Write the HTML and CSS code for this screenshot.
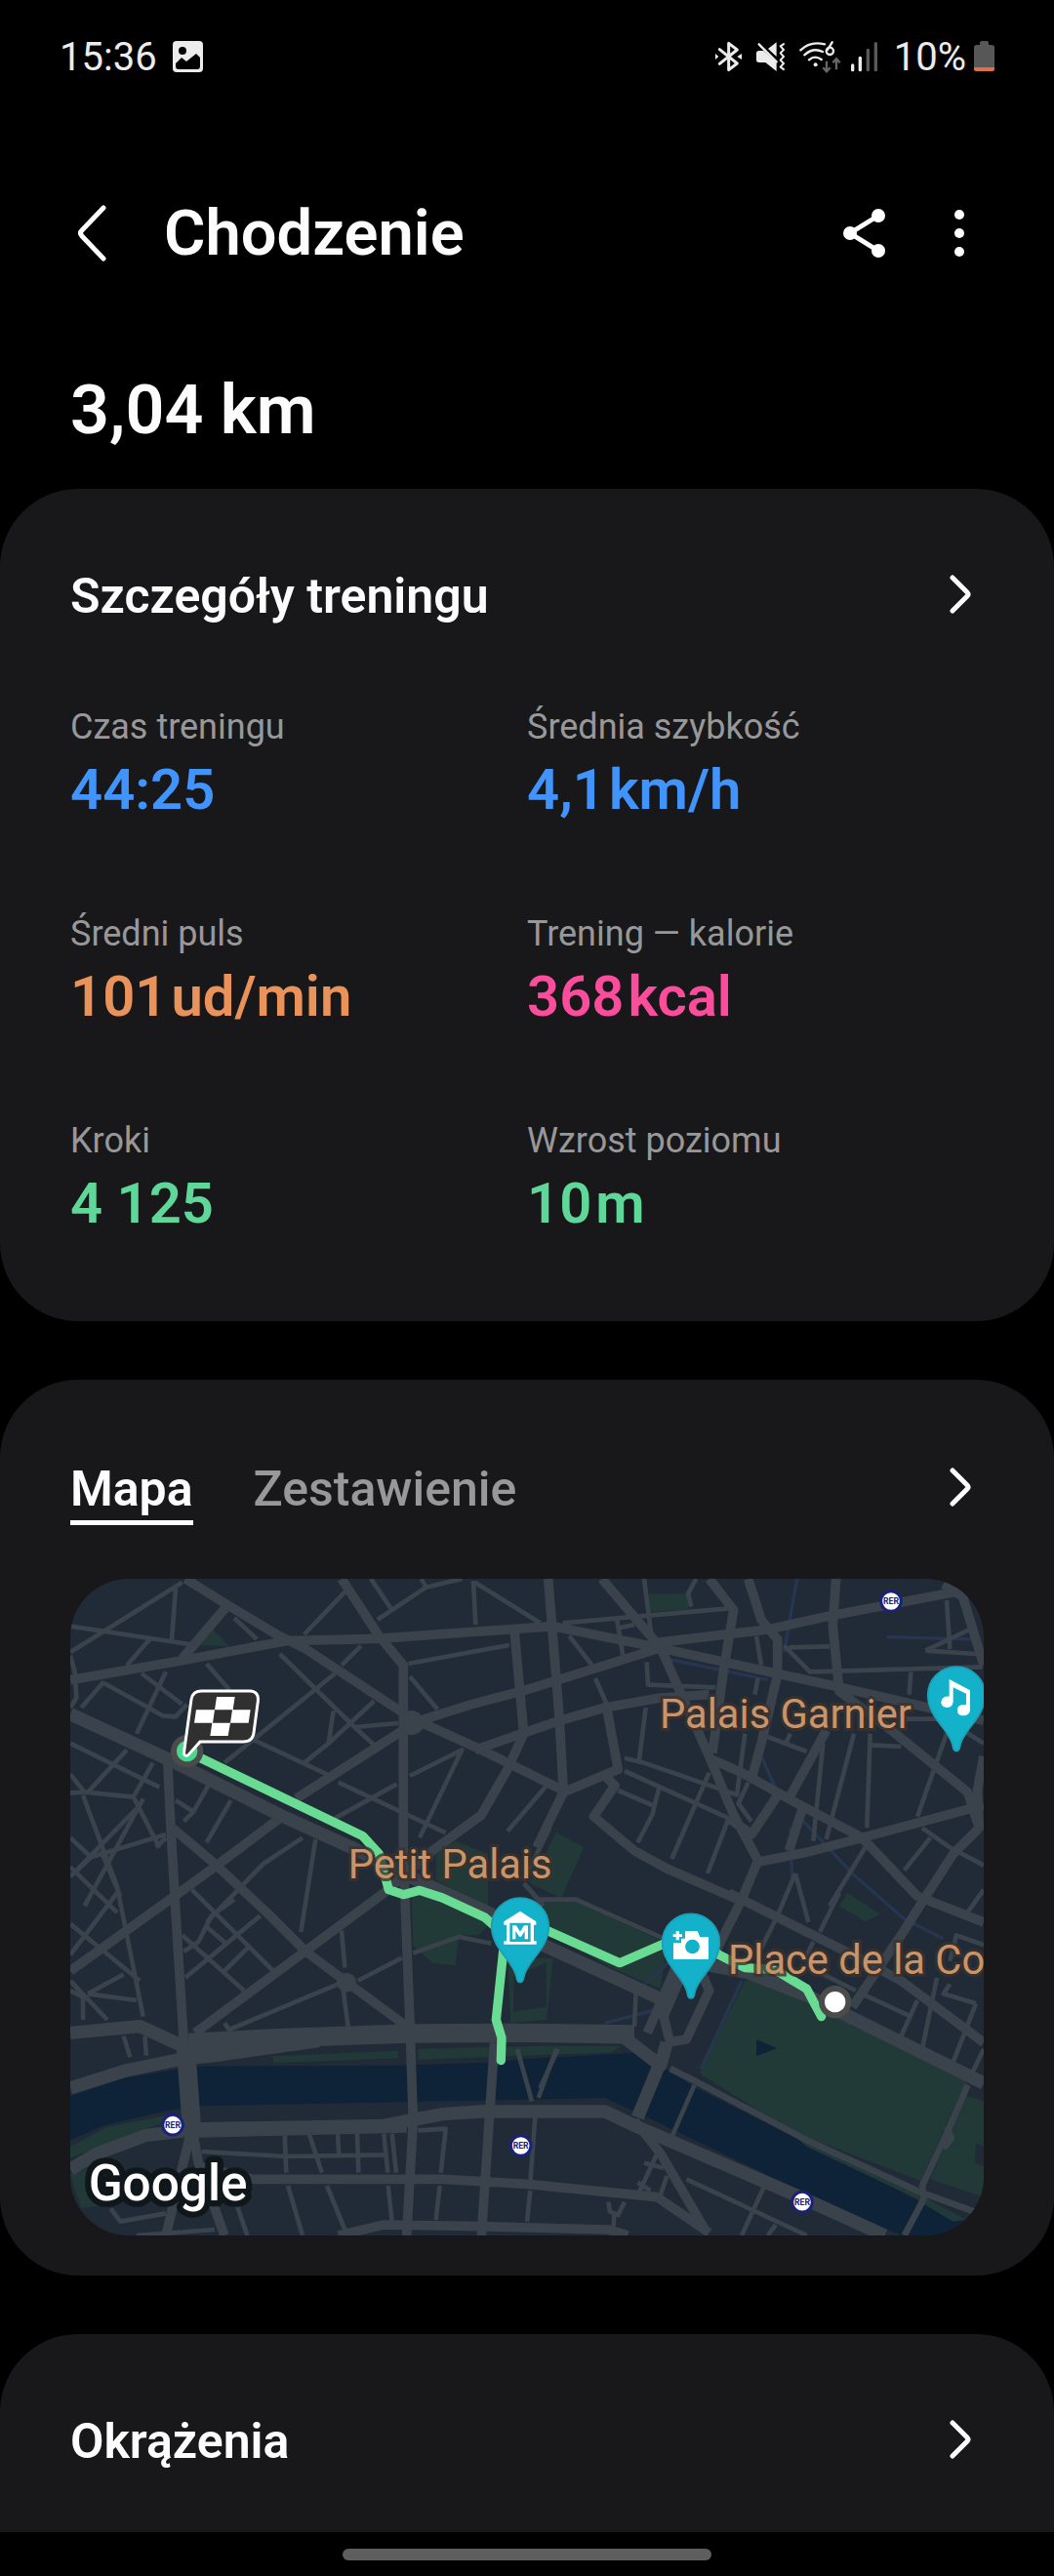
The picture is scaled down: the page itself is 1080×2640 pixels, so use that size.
FILE: index.html
```html
<!DOCTYPE html>
<html lang="pl">
    <head>
        <meta charset="utf-8" />
        <meta name="viewport" content="width=device-width, initial-scale=1" />
        <title>Chodzenie</title>
        <link rel="stylesheet" href="styles.css">
    </head>
    <body>
        <div class="status">
            <span class="status__time">15:36</span>
            <svg class="status__photo" width="31" height="32" viewBox="0 0 31 32">
                <rect width="31" height="32" rx="4" fill="#ececec"/>
                <circle cx="10" cy="10" r="4"/>
                <path d="M3 23l6-6 5 4 10-8 4 4v9q0 3-3 3H6q-3 0-3-3z"/>
            </svg>
            <div class="status__icons">
                <svg width="27" height="32" viewBox="0 0 81 96">
                    <path d="M13 26l54 43-26 20V7l26 20-54 43" fill="none" stroke="#ececec" stroke-width="9" stroke-linejoin="round" stroke-linecap="round"/>
                    <path d="M0 39l10 9-10 9zM81 39l-14 9 14 9z" fill="#ececec"/>
                </svg>
                <svg class="status__mute" width="30" height="32" viewBox="0 0 90 96">
                    <path d="M0 38q0-8 8-8h14L62 66v27L28 66H8q-8 0-8-8zM36 24L62 4v44z" fill="#ececec"/>
                    <path d="M8 10l54 54" stroke="#ececec" stroke-width="7" stroke-linecap="round"/>
                    <path d="M86 8l-12 8 10 11-10 10 10 11-10 11 10 10-10 11 12 9" fill="none" stroke="#ececec" stroke-width="6" stroke-linejoin="round"/>
                </svg>
                <svg class="status__wifi" width="43" height="33" viewBox="0 0 129 99">
                    <path d="M4 28q30-29 74-18M16 43q26-24 56-10M30 58q18-16 38-1" fill="none" stroke="#ececec" stroke-width="7" stroke-linecap="round"/>
                    <circle cx="50" cy="73" r="6" fill="#ececec"/>
                    <path d="M101 4L87 27" stroke="#ececec" stroke-width="7" stroke-linecap="round"/>
                    <circle cx="94" cy="31" r="11" fill="none" stroke="#ececec" stroke-width="7"/>
                    <path d="M84 62v32M73 82l11 12 11-12M114 88V56M103 67l11-12 11 12" fill="none" stroke="#666" stroke-width="7"/>
                </svg>
                <svg class="status__signal" width="28" height="32" viewBox="0 0 84 96">
                    <path d="M5 75v14M28 52v37" stroke="#ececec" stroke-width="10" stroke-linecap="round"/>
                    <path d="M52 28v61M76 8v81" stroke="#5a5a5a" stroke-width="10" stroke-linecap="round"/>
                </svg>
                <span class="status__level">10%</span>
                <svg width="21" height="32" viewBox="0 0 21 32">
                    <path d="M6 2q0-2 2-2h5q2 0 2 2v2h3q3 0 3 3v20H0V7q0-3 3-3h3z" fill="#575757"/>
                    <path d="M0 27h21v2q0 2-3 2H3q-3 0-3-2z" fill="#e0704a"/>
                </svg>
            </div>
        </div>

        <header class="header">
            <button class="icon-btn" aria-label="Wstecz">
                <svg width="32" height="60" viewBox="0 0 32 60"><path d="M28 4L6 27q-3 3 0 6l22 23" fill="none" stroke="#fff" stroke-width="5" stroke-linecap="round"/></svg>
            </button>
            <h1 class="header__title">Chodzenie</h1>
            <button class="icon-btn" aria-label="Udostępnij">
                <svg width="44" height="50" viewBox="0 0 44 50">
                    <path d="M36 7L7 25l29 18" fill="none" stroke="#fff" stroke-width="5"/>
                    <g fill="#fff"><circle cx="36" cy="7" r="7"/><circle cx="7" cy="25" r="7"/><circle cx="36" cy="43" r="7"/></g>
                </svg>
            </button>
            <button class="icon-btn icon-btn--more" aria-label="Więcej opcji">
                <svg width="10" height="50" viewBox="0 0 10 50" fill="#fff"><circle cx="5" cy="6" r="5"/><circle cx="5" cy="25" r="5"/><circle cx="5" cy="44" r="5"/></svg>
            </button>
        </header>

        <p class="distance">3,04 km</p>

        <main class="cards">
            <section class="card">
                <a class="card__head" href="#">
                    <h2 class="card__title">Szczegóły treningu</h2>
                    <svg class="arrow" width="24" height="40" viewBox="0 0 24 40"><path d="M4 3l15 15q2 2 0 4L4 37"/></svg>
                </a>
                <dl class="stats">
                    <div class="stat">
                        <dt>Czas treningu</dt>
                        <dd class="blue">44:25</dd>
                    </div>
                    <div class="stat">
                        <dt>Średnia szybkość</dt>
                        <dd class="blue">4,1<span>km/h</span></dd>
                    </div>
                    <div class="stat">
                        <dt>Średni puls</dt>
                        <dd class="orange">101<span>ud/min</span></dd>
                    </div>
                    <div class="stat">
                        <dt>Trening — kalorie</dt>
                        <dd class="pink">368<span>kcal</span></dd>
                    </div>
                    <div class="stat">
                        <dt>Kroki</dt>
                        <dd class="green">4 125</dd>
                    </div>
                    <div class="stat">
                        <dt>Wzrost poziomu</dt>
                        <dd class="green">10<span>m</span></dd>
                    </div>
                </dl>
            </section>

            <section class="card card--map">
                <div class="card__head">
                    <div class="tabs">
                        <button class="tab tab--active">Mapa</button>
                        <button class="tab">Zestawienie</button>
                    </div>
                    <a class="card__more" href="#" aria-label="Otwórz mapę">
                        <svg class="arrow" width="24" height="40" viewBox="0 0 24 40"><path d="M4 3l15 15q2 2 0 4L4 37"/></svg>
                    </a>
                </div>
                <svg class="map" viewBox="36 54 2808 2019">
                    <defs>
                        <path id="pin" d="M0 172c-6 0-10-6-11-14C-16 110-88 70-88 0A88 88 0 1 1 88 0C88 70 16 110 11 158 10 166 6 172 0 172z"/>
                    </defs>
                    <rect x="36" y="54" width="2808" height="2019" fill="#202b37"/>

                    <!-- Seine -->
                    <path class="map__water" d="M36 1645L200 1590 365 1562 430 1553 1070 1550 1350 1540 1440 1530 1770 1512 1850 1550 1960 1620 2260 1770 2650 1970 2844 2050V2073H2590L2290 1940 1810 1710 1680 1650 1440 1655 430 1675 330 1690 140 1735 36 1780z"/>

                    <!-- parks -->
                    <g class="map__park">
                        <path d="M2110 1290L2200 1285 2790 1600 2650 1905 2260 1755 1970 1575z"/>
                        <path d="M2790 1645L2844 1660V1955L2680 1900z"/>
                        <path d="M2670 1960L2790 2025 2750 2030 2640 1965z"/>
                        <path d="M2260 1765L2650 1940V1965L2300 1800z"/>
                        <path d="M1085 1030L1150 1010 1330 1110 1290 1150 1230 1150 1220 1243 1150 1235 1090 1180z"/>
                        <path d="M1440 1040L1590 1045 1870 1175 1850 1315 1700 1250 1480 1130z"/>
                        <path d="M1380 1220L1520 1220 1500 1410 1390 1420z"/>
                        <path d="M1160 900L1220 860 1320 900V1070L1160 980z"/>
                        <path d="M1530 835L1615 880 1545 1035 1450 990z"/>
                        <path d="M660 1522L1045 1505V1528L660 1542z"/>
                        <path d="M1105 1500L1480 1490 1730 1490 1700 1510 1105 1532z"/>
                        <path d="M36 1800L150 1740 330 1705V1722L150 1790 36 1835z"/>
                        <path d="M36 1885L120 1860 130 1980 70 1990z"/>
                        <path d="M1815 100H1935V148L1815 156z"/>
                        <path d="M475 210L525 262 435 258z"/>
                        <path d="M2425 1020L2525 1085 2480 1108 2400 1060z"/>
                    </g>
                    <path d="M1400 1275L1500 1235V1370L1398 1385zM2820 1790l24 10v60l-28-10z" fill="#202b37"/>
                    <path class="map__water" d="M2145 1470L2208 1498 2145 1522z"/>

                    <!-- underground lines -->
                    <g class="map__line">
                        <path d="M2270 54L2230 280M2545 233L2810 240M1870 300L2180 365M2160 600L2210 710M2250 820L2255 980M2290 800L2440 960 2600 1100 2720 1160"/>
                        <path d="M2100 1290L1975 1560M1680 1420L1870 1370M1800 1300L1880 1230"/>
                    </g>

                    <!-- side streets -->
                    <g class="map__street">
                        <path d="M36 280L380 65M360 85L348 240M36 200L420 258M280 240L210 320M540 175L610 240M455 315L525 395M36 290L50 340 55 420 36 450M140 375L320 475 360 478 395 440M255 345L380 440M330 340L240 530M140 370L70 450"/>
                        <path d="M680 285L910 510 970 565M910 510L1045 498M930 260L870 320M850 345L510 620M970 430L830 560M845 460L830 560M590 545L825 655M860 680L1190 835M755 620L830 560M850 790L1040 685M1075 315L1385 258M1080 355L1165 455M1080 660L1240 580 1110 850M880 95L755 225M980 180L1130 80 1240 54M960 54L1025 150M1115 54L1130 80M1275 60L1282 195M1280 65L1480 190M1500 690L1380 830M1510 820L1430 980"/>
                        <path d="M36 560L310 695M210 580L90 710 36 712M36 655L80 710 230 725 310 880M36 850L100 910 330 840M75 720L180 1000 260 1400M80 1060L260 730M230 725L290 620M36 970L240 760M130 890L190 1030M330 850L300 880M360 735L415 770 385 800M460 690L415 770M530 735L455 865M750 850L630 930 455 1110M790 855L745 1140M36 940L180 1080M36 1210L180 1020M36 1115L250 1290M100 910L36 970M90 1330L200 1270M36 1290L150 1410M90 1330L240 1350M36 1320L75 1340V1410M200 1460L220 1525M265 1460L270 1520"/>
                        <path d="M410 1010L660 1260M380 1150L570 1320M390 1280L620 1090M510 1260L590 1180M450 1120L520 1180M385 1200L430 1170 470 1090 540 1040M870 1135L880 1250M875 1320L890 1430M860 1300L525 1440 510 1420M920 1290L1055 1220M1090 1205L1230 1155 1330 1175M1430 990L1490 1060"/>
                        <path d="M430 1765L1070 1750M440 1815L700 1830 1000 1825M695 1760L700 1880M770 1760L810 1880M858 1760L862 1825M918 1760L922 1880M1000 1760L1012 1880M1025 1760L1038 1880M1105 1750L1190 1745 1175 1880M705 1920L750 2073M825 1920L880 2055M1013 1920L1025 2030M1172 1920L1160 2025M1465 1710L1450 1910M1450 1935L1440 2030M1530 1500L1475 1650M1410 1500L1455 1660M545 1970L580 2073M160 1990L190 2030 330 2005M240 2073L480 2055"/>
                        <path d="M1550 190L2060 145M1800 54L1825 250M1715 170L1735 290M1725 205L1770 195M1960 54L1935 100 1945 140M1570 230L1640 320M1650 360L1685 440M1808 310L1812 380 2020 388M1805 450L1785 610M1740 605L1800 620 2090 720M1740 645L2060 790M1720 705L1825 750M1845 700L1825 780 1780 865M2000 650L1885 915M2060 790L1995 960M2110 530L2085 720M2120 680L2090 745 2130 800M2145 230L2160 320M2150 360L2140 410M2230 260L2310 340 2840 325M2245 265L2370 262M2620 340L2615 410M2730 120L2740 270M2665 275L2800 210M2665 275L2820 285M2180 540L2300 585M2250 530L2235 560M2350 560L2320 860M2445 530L2360 855M2495 530L2485 820M2500 565L2590 570M2730 530L2640 785M2600 485H2844M2780 520L2844 560M2655 820L2740 880 2844 935M2680 850L2600 950M2480 880L2370 1060M2265 960L2210 1090M2265 960L2305 1110M1440 1000L1475 1040H1590L1860 1160M2844 1010L2780 1100M2740 1230L2760 1150 2844 1180"/>
                        <path d="M2210 1090L2160 1190M2400 1020L2340 1140M2320 1170L2290 1230M2330 1260L2450 1320M2470 1330L2620 1400M2640 1350L2590 1460M2700 1280L2655 1500M2740 1300L2720 1330 2820 1360M2820 1360L2750 1540M2844 1500L2810 1570M1775 1320L1770 1430M1535 1500L1480 1620M1955 1610L1885 1770M1850 1800L1780 1950M1800 1850L1860 1865M1870 1890L1850 1950M1780 1910L1820 1935M1690 1970L1695 2000 1720 2010 1740 1970M1708 2010L1705 2060M1930 1900L2300 2073M2170 1920L2100 2073M2205 2040L2180 2073"/>
                    </g>

                    <!-- avenues -->
                    <g class="map__avenue">
                        <path d="M36 365L380 305 700 245 980 238 1520 200 1840 265 2390 385 2844 490"/>
                        <path d="M390 54L520 135 670 225 760 270 1080 480 1300 580 1552 705M520 135L380 300M870 54L985 230 1060 320V900L1065 1040 1080 1420 1090 1720 1070 2073"/>
                        <path d="M1080 500L1270 440 1440 395 1840 270M1840 250L2180 210 2360 170 2780 90M730 730L1090 500"/>
                        <path d="M1400 200L1430 530 1380 640 1300 780 1150 890 1000 1020 420 1450M680 790L480 940 370 1020 36 1260M335 610L345 820 360 1080 385 1480 410 1740 330 2073"/>
                        <path d="M350 820L480 930 640 1080 760 1200 880 1290 1070 1430M1280 580L1540 490 1680 450 1850 420 2000 410"/>
                        <path d="M1505 54L1525 300 1540 490 1552 710 1470 880M1552 710L1720 640 1685 450M1680 660L1710 690 1645 785 1770 890 1870 945 2100 1045M2060 1020L2440 1210 2590 1290 2844 1480"/>
                        <path d="M1670 54L1850 265 2000 600 2075 780 2150 920 2100 1040 2000 1240M2000 54L2075 150 2045 330 2010 590M2120 54L2160 180 2210 240V350L2160 560 2130 670"/>
                        <path d="M2390 54L2380 200 2400 400 2560 520 2795 710 2830 820 2750 900 2660 1040 2590 1150 2440 1370M2010 610L2100 650 2280 750 2470 850 2640 1030 2844 1110M2844 750L2470 850 2300 895 2150 925"/>
                        <path d="M2360 520L2250 720M2210 720L2130 840 2060 790M2290 750L2245 890M2720 70L2780 110 2844 320M2844 600L2825 700 2830 820"/>
                        <path d="M1910 1220L1810 1450M1920 1260L1860 1400 1880 1480M1970 1250L2000 1320 1930 1470 1870 1480M430 1860L600 1900H1180L1440 1915 1840 1955 2000 2065M410 1740L430 1850 510 2073M860 2073L1000 2040 1300 2045 1690 2055 1750 2073M1340 1480L1325 1700 1300 2073M1770 1720L1850 1820 1990 2060"/>
                    </g>
                    <g class="map__quay">
                        <path d="M36 470L340 610 680 780 900 880 1090 975 1330 1085 1490 1180 1860 1350M1990 1240L2120 1265 2300 1335 2844 1605"/>
                        <path d="M36 1450L250 1430 380 1490M36 1620L210 1565 380 1530 480 1520 800 1475M36 1870L120 1820 270 1765 440 1745 1000 1735 1180 1700 1300 1692H1680L1770 1735 2280 1955 2540 2073"/>
                        <path d="M1720 1450L1850 1550 1870 1480M1850 1540L1780 1710" />
                    </g>
                    <path d="M400 1480L700 1465 1080 1452 1440 1450 1770 1455" class="map__quay map__quay--wide"/>
                    <path d="M390 1480L410 1750" class="map__quay map__quay--wide"/>
                    <path d="M1880 1560L1960 1600 2300 1780 2650 1940 2844 2010M2795 1610L2730 1760 2655 1920 2660 1960 2600 2073M2730 1740l15 35-25 30" class="map__street map__street--bold"/>
                    <circle cx="885" cy="1295" r="30" fill="#3a424c"/>
                    <circle cx="1085" cy="497" r="38" fill="#3a424c"/>

                    <!-- walked route -->
                    <path class="map__route" d="M395 585L935 845 985 900 1015 1010 1060 1025 1110 1012 1180 1035 1310 1095 1350 1130 1420 1110 1500 1135 1725 1235 1944 1140 2030 1210 2110 1250 2200 1255 2300 1315 2345 1400M1368 1190L1345 1410 1362 1465 1360 1535"/>

                    <g class="map__place">
                        <text x="1848" y="512">Palais Garnier</text>
                        <text x="890" y="974">Petit Palais</text>
                        <text x="2058" y="1270">Place de la Co</text>
                    </g>

                    <!-- start and finish -->
                    <g class="map__dot">
                        <circle cx="395" cy="584" r="41" fill="#46d98d"/>
                        <circle cx="2387" cy="1355" r="41" fill="#fff"/>
                    </g>
                    <path d="M385 592L408 425Q412 399 440 399H588Q616 400 613 430L600 528Q596 555 568 555H435L402 592Q392 605 385 592z" fill="#303030" stroke="#fff" stroke-width="9"/>
                    <path d="M486 417h56l-6 40h54l-6 40h-56l-7 40h-55l6-40h-55l6-40h57zM480 457l-6 40h54l6-40z" fill="#fff" fill-rule="evenodd"/>

                    <g class="map__pin">
                        <use href="#pin" x="2760" y="412"/>
                        <use href="#pin" x="1419" y="1123"/>
                        <use href="#pin" x="1944" y="1172"/>
                    </g>
                    <g fill="#fff">
                        <path d="M2738 363L2802 397V458Q2800 474 2781 475 2762 475 2763 456 2764 439 2790 441V407L2750 388V432Q2748 450 2730 450 2712 448 2713 433 2716 414 2738 416z"/>
                        <path d="M1419 1076L1468 1108V1118H1461V1168H1469V1178H1369V1168H1377V1118H1369V1108zM1387 1112V1170H1451V1112z" fill-rule="evenodd"/>
                        <path d="M1395 1162V1120H1407L1419 1139 1431 1120H1443V1162H1433V1137L1422 1154H1416L1405 1137V1162z"/>
                        <path d="M1926 1137H1964L1972 1156H1998V1224H1890V1174H1914V1160H1926zM1948 1163a22 22 0 1 0 1 0z" fill-rule="evenodd"/>
                        <path d="M1898 1137h10v10h9v8h-9v10h-10v-10h-9v-8h9z"/>
                    </g>

                    <g class="map__rer">
                        <circle cx="2559" cy="123" r="31"/><text x="2559" y="132">RER</text>
                        <circle cx="351" cy="1733" r="31"/><text x="351" y="1742">RER</text>
                        <circle cx="1421" cy="1797" r="31"/><text x="1421" y="1806">RER</text>
                        <circle cx="2286" cy="1970" r="31"/><text x="2286" y="1979">RER</text>
                    </g>
                    <text class="map__google" x="92" y="1964">Google</text>
                </svg>
            </section>

            <section class="card card--last">
                <a class="card__head" href="#">
                    <h2 class="card__title">Okrążenia</h2>
                    <svg class="arrow" width="24" height="40" viewBox="0 0 24 40"><path d="M4 3l15 15q2 2 0 4L4 37"/></svg>
                </a>
            </section>
        </main>

        <div class="navbar"><div class="navbar__pill"></div></div>
    </body>
</html>
```
FILE: styles.css
```css
*,*::before,*::after{
    box-sizing: border-box;
}
body{
    display: flex;
    flex-direction: column;
    min-height: 100vh;
    margin: 0;
    background: #000;
    color: #fcfcfc;
    font-family: Roboto, "Liberation Sans", sans-serif;
}
h1,h2,p,dl,dd{
    margin: 0;
}
a{
    color: inherit;
    text-decoration: none;
}
button{
    padding: 0;
    border: 0;
    background: none;
    color: inherit;
    font: inherit;
}
svg{
    display: block;
}

/* status bar */
.status{
    display: flex;
    align-items: center;
    height: 116px;
    padding: 0 61px;
    color: #ececec;
    font-size: 40px;
}
.status__photo{
    margin-left: 16px;
}
.status__icons{
    display: flex;
    align-items: center;
    margin-left: auto;
}
.status__mute{
    margin-left: 15px;
}
.status__wifi{
    margin-left: 14px;
}
.status__signal{
    margin-left: 10px;
}
.status__level{
    margin: 0 8px 0 16px;
}

/* title bar */
.header{
    display: flex;
    align-items: center;
    height: 96px;
    margin-top: 75px;
    padding: 0 92px 0 78px;
}
.header__title{
    flex: 1;
    margin-left: 58px;
    font-size: 65px;
    font-weight: 600;
}
.icon-btn--more{
    margin-left: 70px;
}
.distance{
    margin: 89px 72px 37px;
    font-size: 70px;
    font-weight: 600;
    line-height: 88px;
}

/* cards */
.cards{
    display: flex;
    flex: 1;
    flex-direction: column;
    gap: 60px;
}
.card{
    padding: 78px 72px 83px;
    border-radius: 80px;
    background: #18181a;
}
.card--map{
    padding: 80px 72px 41px;
}
.card--last{
    flex: 1;
    padding-bottom: 40px;
    border-radius: 80px 80px 0 0;
}
.card__head{
    display: flex;
    align-items: flex-start;
    justify-content: space-between;
    font-size: 50px;
    line-height: 64px;
}
.card__title{
    font-size: 50px;
    font-weight: 600;
}
.arrow{
    margin: 10px 12px 0 0;
    fill: none;
    stroke: #fcfcfc;
    stroke-width: 5;
    stroke-linecap: round;
}

.stats{
    display: grid;
    grid-template-columns: 1fr 1fr;
    row-gap: 84px;
    margin-top: 76px;
}
.stat dt{
    color: #98989a;
    font-size: 36px;
    line-height: 52px;
}
.stat dd{
    font-size: 58px;
    font-weight: 600;
    line-height: 76px;
}
.stat dd span{
    margin-left: 4px;
}
.blue{
    color: #4094fb;
}
.orange{
    color: #e9935a;
}
.pink{
    color: #fb4d9b;
}
.green{
    color: #5fd798;
}

.tabs{
    display: flex;
    gap: 62px;
}
.tab{
    border-bottom: 5px solid transparent;
    color: #98989a;
    font-weight: 500;
}
.tab--active{
    border-color: #fcfcfc;
    color: #fcfcfc;
    font-weight: 600;
}

/* map */
.map{
    width: 100%;
    margin-top: 55px;
    border-radius: 60px;
}
.map__water{
    fill: #0e2238;
}
.map__park{
    fill: #223a37;
}
.map__line,.map__street,.map__avenue,.map__quay{
    fill: none;
    stroke: #3a424c;
    stroke-width: 14;
    stroke-linejoin: round;
}
.map__line{
    stroke: #263550;
    stroke-width: 10;
}
.map__street--bold{
    stroke-width: 20;
}
.map__avenue{
    stroke-width: 29;
}
.map__quay{
    stroke-width: 40;
}
.map__quay--wide{
    stroke-width: 58;
}
.map__route{
    fill: none;
    stroke: #69db92;
    stroke-width: 28;
    stroke-linejoin: round;
    stroke-linecap: round;
}
.map__place{
    fill: #cb9468;
    stroke: rgba(58,50,46,0.8);
    stroke-width: 18;
    paint-order: stroke;
    font-size: 125px;
}
.map__dot{
    stroke: #4b4b4b;
    stroke-width: 18;
}
.map__pin{
    fill: #14b1cb;
    stroke: #1f9db2;
    stroke-width: 5;
}
.map__rer circle{
    fill: #fff;
    stroke: #1a2278;
    stroke-width: 9;
}
.map__rer text{
    fill: #1a2278;
    font-size: 26px;
    font-weight: 700;
    text-anchor: middle;
}
.map__google{
    fill: #fff;
    stroke: #10171a;
    stroke-width: 38;
    stroke-linejoin: round;
    paint-order: stroke;
    font-size: 154px;
    font-weight: 500;
}

.navbar{
    display: flex;
    justify-content: center;
    height: 45px;
    padding-top: 17px;
}
.navbar__pill{
    width: 35%;
    height: 12px;
    border-radius: 6px;
    background: #5e5e5e;
}
```
